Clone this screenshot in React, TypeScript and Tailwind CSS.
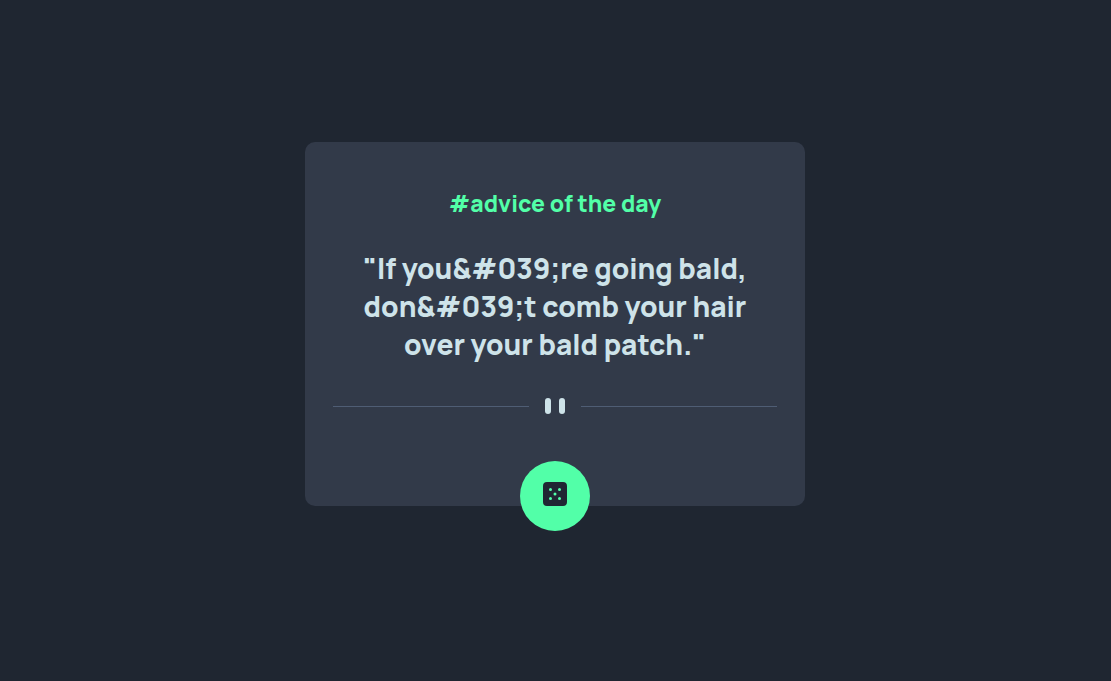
export default function App() {
  return (
    <main className="flex min-h-screen items-center justify-center bg-[#1f2631] pt-4 pr-[17px] pb-[49px] pl-4 font-['Manrope','Open_Sans',sans-serif]">
      <section className="flex w-full max-w-[500px] flex-col items-center rounded-[10px] bg-[#323a49] px-7 pt-11 text-center">
        <h1 className="text-[23px] leading-[34px] font-extrabold text-[#52ffa8]">#advice of the day</h1>
        <p className="mt-[29px] px-4 text-[28px] leading-[38px] font-extrabold text-[#cee3e9]">
          "If you&amp;#039;re going bald,
          <br />
          don&amp;#039;t comb your hair
          <br />
          over your bald patch."
        </p>
        <svg className="mt-[35px] h-4 w-full max-w-[444px]" viewBox="0 0 444 16" aria-hidden="true">
          <path fill="#4f5d74" d="M0 8h196v1H0zM248 8h196v1H248z" />
          <g fill="#cee3e9" transform="translate(212)">
            <rect width="6" height="16" rx="3" />
            <rect x="14" width="6" height="16" rx="3" />
          </g>
        </svg>
        <button
          type="button"
          aria-label="New advice"
          className="mt-[47px] -mb-[25px] flex size-[70px] items-center justify-center rounded-full bg-[#52ffa8] pb-1"
        >
          <svg width="24" height="24" viewBox="0 0 24 24" aria-hidden="true">
            <path
              fill="#202733"
              d="M20 0H4a4.005 4.005 0 0 0-4 4v16a4.005 4.005 0 0 0 4 4h16a4.005 4.005 0 0 0 4-4V4a4.005 4.005 0 0 0-4-4ZM7.5 18a1.5 1.5 0 1 1 0-3 1.5 1.5 0 0 1 0 3Zm0-9a1.5 1.5 0 1 1 0-3 1.5 1.5 0 0 1 0 3Zm4.5 4.5a1.5 1.5 0 1 1 0-3 1.5 1.5 0 0 1 0 3Zm4.5 4.5a1.5 1.5 0 1 1 0-3 1.5 1.5 0 0 1 0 3Zm0-9a1.5 1.5 0 1 1 0-3 1.5 1.5 0 0 1 0 3Z"
            />
          </svg>
        </button>
      </section>
    </main>
  );
}
